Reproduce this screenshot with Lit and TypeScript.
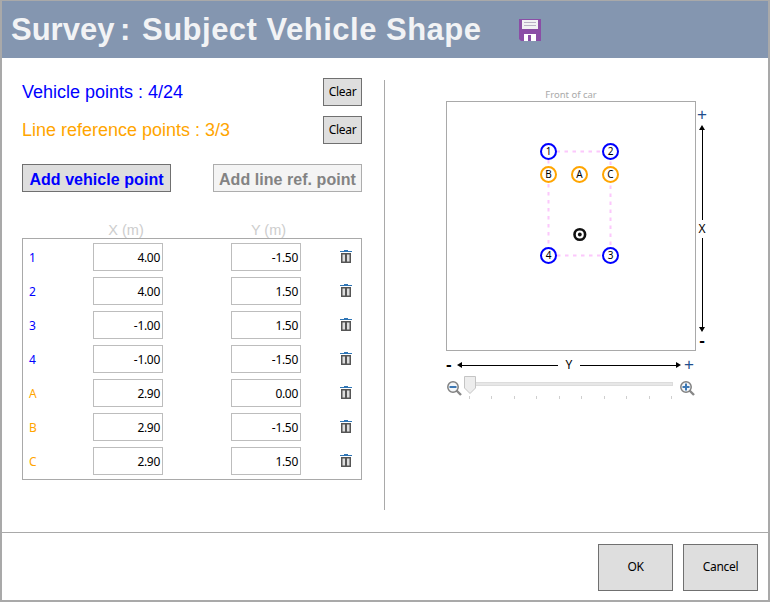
import { css, html, LitElement, svg } from 'lit';
import { customElement } from 'lit/decorators.js';

interface Row { id: string; x: string; y: string; kind: 'veh' | 'ref'; }
interface Pin { id: string; left: number; top: number; kind: 'veh' | 'ref'; }

const ROWS: Row[] = [
  { id: '1', x: '4.00', y: '-1.50', kind: 'veh' },
  { id: '2', x: '4.00', y: '1.50', kind: 'veh' },
  { id: '3', x: '-1.00', y: '1.50', kind: 'veh' },
  { id: '4', x: '-1.00', y: '-1.50', kind: 'veh' },
  { id: 'A', x: '2.90', y: '0.00', kind: 'ref' },
  { id: 'B', x: '2.90', y: '-1.50', kind: 'ref' },
  { id: 'C', x: '2.90', y: '1.50', kind: 'ref' },
];

// centres relative to the canvas padding box
const PINS: Pin[] = [
  { id: '1', left: 101, top: 49, kind: 'veh' },
  { id: '2', left: 163, top: 49, kind: 'veh' },
  { id: '3', left: 163, top: 153, kind: 'veh' },
  { id: '4', left: 101, top: 153, kind: 'veh' },
  { id: 'A', left: 132, top: 72, kind: 'ref' },
  { id: 'B', left: 101, top: 72, kind: 'ref' },
  { id: 'C', left: 163, top: 72, kind: 'ref' },
];

const TICKS = Array.from({ length: 10 });

const trash = svg`<svg width="12" height="14" viewBox="0 0 12 14">
  <rect x="4" y="0" width="4" height="1" fill="#2f75b5"/>
  <rect x="0" y="1" width="12" height="1" fill="#2f75b5"/>
  <rect x="1" y="3" width="10" height="10" fill="#555"/>
  <rect x="2.5" y="4.5" width="2.5" height="7" fill="#ddd"/>
  <rect x="7" y="4.5" width="2.5" height="7" fill="#ddd"/>
</svg>`;

const floppy = svg`<svg width="22" height="22" viewBox="0 0 22 22">
  <path d="M0 0H22V22H2L0 20Z" fill="#8b4ea6"/>
  <rect x="3" y="1" width="16" height="9" fill="#f1f1f4"/>
  <rect x="5" y="3" width="12" height="1" fill="#b9b0c6"/>
  <rect x="5" y="6" width="12" height="1" fill="#b9b0c6"/>
  <rect x="5" y="15" width="12" height="7" fill="#fff"/>
  <rect x="9" y="16" width="3" height="6" fill="#8b4ea6"/>
</svg>`;

const zoomIcon = (plus: boolean) => svg`<svg width="15" height="15" viewBox="0 0 15 15">
  <path d="M9.5 9.5L14 14" stroke="#888" stroke-width="2.4" fill="none"/>
  <circle cx="6" cy="6" r="5.2" fill="#f4f6f8" stroke="#808080" stroke-width="1.5"/>
  <rect x="2.5" y="5" width="7" height="2" fill="#3d78b4"/>
  ${plus ? svg`<rect x="5" y="2.5" width="2" height="7" fill="#3d78b4"/>` : null}
</svg>`;

@customElement('app-root')
export class AppRoot extends LitElement {
  static styles = css`
    :host {
      display: block;
      box-sizing: border-box;
      width: 770px;
      height: 602px;
      border: solid #a9a9a9;
      border-width: 1px 2px 2px 2px;
      background: #fff;
      font-family: 'Noto Sans', sans-serif;
      font-size: 12px;
      color: #000;
      overflow: hidden;
    }

    .title {
      display: flex;
      align-items: center;
      height: 57px;
      padding-left: 9px;
      background: #8496b0;
      color: #f2f3f5;
      font: bold 31px 'Liberation Sans', sans-serif;
      white-space: pre;
    }
    .title .lead { word-spacing: -3px; margin-right: 3px; }
    .title .tail { letter-spacing: 0.5px; }
    .title svg { margin-left: 37px; }

    .main { display: flex; height: 474px; }

    .left { width: 340px; margin-left: 20px; padding-top: 20px; }
    .count {
      display: flex;
      align-items: center;
      justify-content: space-between;
      margin-bottom: 10px;
      font: 18px 'Liberation Sans', sans-serif;
    }
    .veh { color: #0000ff; }
    .ref { color: #ffa500; }

    button {
      box-sizing: border-box;
      margin: 0;
      padding: 0 0 2px;
      background: #dedede;
      border: 1px solid #707070;
      color: #000;
      font: 12px 'Noto Sans', sans-serif;
      letter-spacing: -0.3px;
    }
    .clear { width: 39px; height: 28px; }

    .adds { display: flex; justify-content: space-between; margin-top: 20px; }
    .add {
      width: 149px;
      height: 28px;
      padding: 3px 0 0;
      font: bold 16px 'Liberation Sans', sans-serif;
      letter-spacing: 0.05px;
      color: #0000ff;
    }
    .add.off { background: #f4f4f4; border-color: #adadad; color: #838383; }

    .heads, .grid {
      display: grid;
      grid-template-columns: 70px 70px 68px 70px 1fr;
    }
    .heads {
      height: 16px;
      margin-top: 30px;
      font: 14.5px/16px 'Liberation Sans', sans-serif;
      color: #cdcdcd;
      text-align: center;
    }
    .heads span:nth-child(1) { grid-column: 2; padding-right: 2px; }
    .heads span:nth-child(2) { grid-column: 4; padding-left: 7px; }

    .grid {
      box-sizing: border-box;
      height: 242px;
      padding-top: 4px;
      row-gap: 6px;
      grid-auto-rows: 28px;
      align-items: center;
      border: 1px solid #a9a9a9;
    }
    .rid { padding-left: 6px; }
    .num {
      box-sizing: border-box;
      height: 28px;
      line-height: 28px;
      padding-right: 2px;
      border: 1px solid #bdbdbd;
      text-align: right;
      letter-spacing: -0.3px;
    }
    .del { display: flex; justify-content: center; padding-left: 29px; }

    .divider {
      width: 1px;
      height: 430px;
      margin: 22px 0 0 22px;
      background: #a9a9a9;
    }

    .plot {
      display: grid;
      grid-template-columns: 250px 16px;
      grid-template-rows: 15px 250px 24px auto;
      align-content: start;
      margin: 28px 0 0 61px;
    }
    .front {
      align-self: end;
      padding-bottom: 1px;
      text-align: center;
      font-size: 9.5px;
      line-height: 11px;
      color: #a9a9a9;
      grid-column: 1 / 3;
      width: 250px;
    }
    .canvas {
      position: relative;
      box-sizing: border-box;
      border: 1px solid #a9a9a9;
    }
    .canvas > svg { position: absolute; left: 0; top: 0; }
    .pin {
      position: absolute;
      box-sizing: border-box;
      width: 17px;
      height: 17px;
      margin: -8.5px 0 0 -8.5px;
      border: 2.5px solid;
      border-radius: 50%;
      background: #fff;
      font-size: 10px;
      line-height: 12px;
      text-align: center;
    }
    .pin b { font-weight: 400; color: #000; }
    .pin.veh { border-color: #0000ff; }
    .pin.ref { border-color: #ffa500; }

    .x-axis {
      display: flex;
      flex-direction: column;
      align-items: center;
      width: 12px;
      padding: 6px 0 4px;
    }
    .x-axis .rule { flex: 1; width: 1px; background: #000; }
    .x-axis .tri-up { margin-top: 2px; }
    .sign { font: 17px/16px 'Liberation Sans', sans-serif; color: #1f4e8c; }
    .sign.minus { color: #000; font-weight: 700; }
    .x-axis .minus { line-height: 12px; margin-top: 3px; }
    .axis-label { line-height: 18px; }
    .tri-up, .tri-down, .tri-left, .tri-right { width: 0; height: 0; border: solid transparent; flex: none; }
    .tri-up { border-width: 0 3.5px 5px; border-bottom-color: #000; }
    .tri-down { border-width: 5px 3.5px 0; border-top-color: #000; }
    .tri-left { border-width: 3.5px 5px 3.5px 0; border-right-color: #000; }
    .tri-right { border-width: 3.5px 0 3.5px 5px; border-left-color: #000; }

    .y-axis {
      display: flex;
      align-items: center;
      box-sizing: border-box;
      width: 250px;
      height: 24px;
      grid-column: 1;
      padding-top: 4px;
    }
    .y-axis .rule { flex: 1; height: 1px; background: #000; }
    .y-axis .axis-label { padding: 0 8px; }
    .y-axis .sign { width: 11px; }
    .y-axis .sign:last-child { text-align: right; width: 13px; padding-right: 2px; }

    .slider { display: flex; box-sizing: border-box; width: 250px; grid-column: 1; align-items: flex-start; padding: 0 1px; }
    .slider > svg { flex: none; margin-top: 6px; }
    .track-wrap { position: relative; flex: 1; margin: 0 7px 0 8px; }
    .track {
      box-sizing: border-box;
      height: 4px;
      margin-top: 7px;
      background: #e7e7e7;
      border: 1px solid #dcdcdc;
    }
    .thumb { position: absolute; left: -6px; top: 1px; }
    .ticks { display: flex; justify-content: space-between; margin: 10px 1px 0 -1px; }
    .ticks i { width: 1px; height: 3px; background: #cfcfcf; }

    .footer {
      display: flex;
      justify-content: flex-end;
      gap: 10px;
      box-sizing: border-box;
      height: 68px;
      padding: 11px 10px 0 0;
      border-top: 1px solid #a9a9a9;
    }
    .footer button { width: 75px; height: 47px; }
  `;

  render() {
    return html`
      <div class="title"><span><span class="lead">Survey :</span> <span class="tail">Subject Vehicle Shape</span></span>${floppy}</div>
      <div class="main">
        <div class="left">
          <div class="count veh"><span>Vehicle points : 4/24</span><button class="clear">Clear</button></div>
          <div class="count ref"><span>Line reference points : 3/3</span><button class="clear">Clear</button></div>
          <div class="adds">
            <button class="add">Add vehicle point</button>
            <button class="add off">Add line ref. point</button>
          </div>
          <div class="heads"><span>X (m)</span><span>Y (m)</span></div>
          <div class="grid">
            ${ROWS.map(r => html`
              <span class="rid ${r.kind}">${r.id}</span>
              <span class="num">${r.x}</span>
              <span></span>
              <span class="num">${r.y}</span>
              <span class="del">${trash}</span>
            `)}
          </div>
        </div>
        <div class="divider"></div>
        <div class="plot">
          <div class="front">Front of car</div>
          <div class="canvas">
            <svg width="248" height="248">
              <path d="M101.5 49.5H163.5V153.5H101.5Z" fill="none" stroke="#fcc8fc" stroke-width="2" stroke-dasharray="3.5 4.5"/>
              <circle cx="132.8" cy="132.5" r="5.3" fill="#fff" stroke="#111" stroke-width="2.6"/>
              <circle cx="132.8" cy="132.5" r="1.9" fill="#111"/>
            </svg>
            ${PINS.map(p => html`<div class="pin ${p.kind}" style="left:${p.left + 0.5}px;top:${p.top + 0.5}px"><b>${p.id}</b></div>`)}
          </div>
          <div class="x-axis">
            <span class="sign">+</span>
            <i class="tri-up"></i>
            <i class="rule"></i>
            <span class="axis-label">X</span>
            <i class="rule"></i>
            <i class="tri-down"></i>
            <span class="sign minus">-</span>
          </div>
          <div class="y-axis">
            <span class="sign minus">-</span>
            <i class="tri-left"></i>
            <i class="rule"></i>
            <span class="axis-label">Y</span>
            <i class="rule"></i>
            <i class="tri-right"></i>
            <span class="sign">+</span>
          </div>
          <div class="slider">
            ${zoomIcon(false)}
            <div class="track-wrap">
              <div class="track"></div>
              <svg class="thumb" width="12" height="18" viewBox="0 0 12 18">
                <path d="M.5.5H11.5V12L6 17.5L.5 12Z" fill="#ededed" stroke="#c4c4c4"/>
              </svg>
              <div class="ticks">${TICKS.map(() => html`<i></i>`)}</div>
            </div>
            ${zoomIcon(true)}
          </div>
        </div>
      </div>
      <div class="footer">
        <button>OK</button>
        <button>Cancel</button>
      </div>
    `;
  }
}
